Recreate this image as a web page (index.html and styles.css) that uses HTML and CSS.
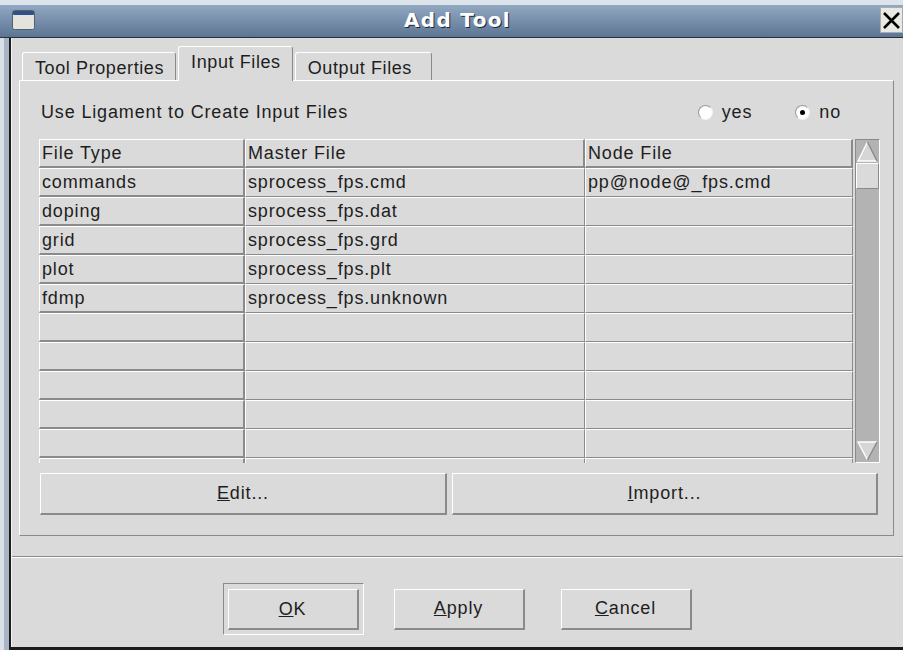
FILE: index.html
```html
<!DOCTYPE html>
<html lang="en">
<head>
<meta charset="utf-8">
<title>Add Tool</title>
<link rel="stylesheet" href="styles.css">
</head>
<body>
<div class="window">
  <header class="titlebar">
    <svg class="win-icon" width="23" height="20" viewBox="0 0 23 20">
      <rect x="0.5" y="0.5" width="22" height="19" rx="2" fill="#e4e4de" stroke="#55606c"/>
      <rect x="1" y="1" width="21" height="4" rx="1" fill="#2f5089"/>
    </svg>
    <h1 class="title">Add Tool</h1>
    <button class="close" type="button">
      <svg width="21" height="24" viewBox="0 0 21 24">
        <path d="M3 5 L18 20 M18 5 L3 20" stroke="#000" stroke-width="2.6" fill="none"/>
      </svg>
    </button>
  </header>

  <div class="frame">
    <div class="client">
      <div class="content">
        <nav class="tabs">
          <div class="tab">Tool Properties</div>
          <div class="tab active">Input Files</div>
          <div class="tab last">Output Files</div>
        </nav>

        <section class="panel">
          <div class="option-row">
            <span class="option-label">Use Ligament to Create Input Files</span>
            <div class="radios">
              <label class="radio"><span class="radio-dot"></span>yes</label>
              <label class="radio checked"><span class="radio-dot"></span>no</label>
            </div>
          </div>

          <div class="table-wrap">
            <div class="grid">
              <div class="row">
                <div class="cell head">File Type</div>
                <div class="cell head">Master File</div>
                <div class="cell head">Node File</div>
              </div>
              <div class="row">
                <div class="cell head">commands</div>
                <div class="cell">sprocess_fps.cmd</div>
                <div class="cell">pp@node@_fps.cmd</div>
              </div>
              <div class="row">
                <div class="cell head">doping</div>
                <div class="cell">sprocess_fps.dat</div>
                <div class="cell"></div>
              </div>
              <div class="row">
                <div class="cell head">grid</div>
                <div class="cell">sprocess_fps.grd</div>
                <div class="cell"></div>
              </div>
              <div class="row">
                <div class="cell head">plot</div>
                <div class="cell">sprocess_fps.plt</div>
                <div class="cell"></div>
              </div>
              <div class="row">
                <div class="cell head">fdmp</div>
                <div class="cell">sprocess_fps.unknown</div>
                <div class="cell"></div>
              </div>
              <div class="row"><div class="cell head"></div><div class="cell"></div><div class="cell"></div></div>
              <div class="row"><div class="cell head"></div><div class="cell"></div><div class="cell"></div></div>
              <div class="row"><div class="cell head"></div><div class="cell"></div><div class="cell"></div></div>
              <div class="row"><div class="cell head"></div><div class="cell"></div><div class="cell"></div></div>
              <div class="row"><div class="cell head"></div><div class="cell"></div><div class="cell"></div></div>
              <div class="row"><div class="cell head"></div><div class="cell"></div><div class="cell"></div></div>
            </div>

            <div class="scrollbar">
              <svg class="arrow" width="23" height="23" viewBox="0 0 23 23">
                <polygon points="11.5,2 2,21 21,21" fill="#d6d6d6"/>
                <path d="M11.5 2 L2 21 L21 21" stroke="#fff" stroke-width="1.4" fill="none"/>
                <path d="M11.5 2 L21 21" stroke="#8a8a8a" stroke-width="1.4" fill="none"/>
              </svg>
              <div class="thumb"></div>
              <div class="trough"></div>
              <svg class="arrow" width="23" height="22" viewBox="0 0 23 22">
                <polygon points="2,2 21,2 11.5,20" fill="#d6d6d6"/>
                <path d="M11.5 20 L2 2 L21 2" stroke="#fff" stroke-width="1.4" fill="none"/>
                <path d="M21 2 L11.5 20" stroke="#8a8a8a" stroke-width="1.4" fill="none"/>
              </svg>
            </div>
          </div>

          <div class="action-row">
            <button class="btn edit" type="button"><u>E</u>dit...</button>
            <button class="btn import" type="button"><u>I</u>mport...</button>
          </div>
        </section>
      </div>

      <div class="separator"></div>

      <footer class="dialog-buttons">
        <div class="focus-frame">
          <button class="btn dlg" type="button"><u>O</u>K</button>
        </div>
        <button class="btn dlg" type="button"><u>A</u>pply</button>
        <button class="btn dlg cancel" type="button"><u>C</u>ancel</button>
      </footer>
    </div>
  </div>
</div>
</body>
</html>
```

FILE: styles.css
```css
* {
  box-sizing: border-box;
}

html,
body {
  margin: 0;
  padding: 0;
}

body {
  width: 903px;
  height: 650px;
  overflow: hidden;
  background: #dadada;
  font-family: "Liberation Sans", Arial, sans-serif;
  font-size: 18px;
  letter-spacing: 0.85px;
  color: #1e1e1e;
}

.window {
  display: flex;
  flex-direction: column;
  width: 903px;
  height: 650px;
}

/* ---- title bar ---- */
.titlebar {
  flex: none;
  height: 38px;
  display: flex;
  align-items: flex-start;
  border-top: 5px solid #dde3ea;
  border-bottom: 1px solid #27313d;
  background: linear-gradient(#92a8c3, #5c7593);
}

.win-icon {
  flex: none;
  margin: 5px 0 0 12px;
}

.title {
  flex: 1;
  margin: 0;
  text-align: center;
  font-family: "DejaVu Sans", sans-serif;
  font-weight: bold;
  font-size: 20px;
  letter-spacing: 1.3px;
  line-height: 30px;
  color: #fff;
  text-shadow: 1px 1px 0 #1d2734;
}

.close {
  flex: none;
  width: 23px;
  height: 26px;
  margin-top: 2px;
  padding: 0;
  display: flex;
  align-items: center;
  justify-content: center;
  background: #e9e9e3;
  border: 1px solid #a6adb5;
}

/* ---- window frame and client area ---- */
.frame {
  flex: 1;
  display: flex;
  border-left: 4px solid #dae0e7;
  padding-left: 5px;
  background: #a9b5c4;
}

.client {
  flex: 1;
  display: flex;
  flex-direction: column;
  background: #dadada;
  border-left: 2px solid #1b1b1b;
  border-bottom: 3px solid #1b1b1b;
  box-shadow: inset 1px 0 0 #f4f4f4;
}

.content {
  padding: 8px 9px 0 8px;
}

/* ---- tabs ---- */
.tabs {
  display: flex;
  align-items: flex-end;
  height: 34px;
  padding-left: 3px;
  gap: 2px;
}

.tab {
  height: 28px;
  padding: 0 11px 0 12px;
  line-height: 30px;
  letter-spacing: 0.6px;
  background: #dadada;
  border-top: 1px solid #fff;
  border-left: 1px solid #fff;
  border-right: 1px solid #8a8a8a;
  border-radius: 3px 3px 0 0;
  white-space: nowrap;
}

.tab.active {
  position: relative;
  z-index: 1;
  height: 35px;
  margin-bottom: -1px;
  line-height: 30px;
}

.tab.last {
  padding-right: 19px;
}

/* ---- tab panel ---- */
.panel {
  height: 456px;
  padding: 19px 13px 0 19px;
  border-top: 1px solid #fff;
  border-left: 1px solid #fff;
  border-right: 1px solid #8a8a8a;
  border-bottom: 1px solid #8a8a8a;
}

.option-row {
  display: flex;
  align-items: center;
  justify-content: space-between;
  height: 24px;
  padding-left: 2px;
}

.radios {
  display: flex;
  align-items: center;
  margin-right: 39px;
}

.radio {
  display: flex;
  align-items: center;
  gap: 9px;
}

.radio + .radio {
  margin-left: 43px;
}

.radio-dot {
  width: 15px;
  height: 15px;
  border-radius: 50%;
  background: #fff;
  border: 1px solid;
  border-color: #9a9a9a #f2f2f2 #f2f2f2 #9a9a9a;
  display: flex;
  align-items: center;
  justify-content: center;
}

.radio.checked .radio-dot::after {
  content: "";
  width: 5px;
  height: 5px;
  border-radius: 50%;
  background: #000;
}

/* ---- file table ---- */
.table-wrap {
  display: flex;
  gap: 2px;
  height: 324px;
  margin-top: 15px;
}

.grid {
  width: 814px;
  height: 324px;
  overflow: hidden;
}

.row {
  display: grid;
  grid-template-columns: 206px 340px 268px;
  height: 29px;
}

.cell {
  height: 29px;
  padding-left: 2px;
  line-height: 27px;
  white-space: nowrap;
  overflow: hidden;
  background: #dadada;
  border-top: 1px solid #fff;
  border-left: 1px solid #fff;
  border-right: 1px solid #8a8a8a;
  border-bottom: 1px solid #8a8a8a;
}

.cell.head {
  line-height: 26px;
  border-right-width: 2px;
  border-bottom-width: 2px;
}

.scrollbar {
  width: 25px;
  height: 324px;
  display: flex;
  flex-direction: column;
  background: #b3b3b3;
  border-top: 1px solid #8a8a8a;
  border-left: 1px solid #8a8a8a;
  border-right: 1px solid #fff;
  border-bottom: 1px solid #fff;
}

.arrow {
  display: block;
  flex: none;
}

.thumb {
  flex: none;
  height: 26px;
  background: #dadada;
  border-top: 1px solid #fff;
  border-left: 1px solid #fff;
  border-right: 1px solid #8a8a8a;
  border-bottom: 1px solid #8a8a8a;
}

.trough {
  flex: 1;
}

/* ---- buttons ---- */
.btn {
  font: inherit;
  letter-spacing: inherit;
  color: inherit;
  padding: 0;
  background: #dadada;
  border-top: 1px solid #fff;
  border-left: 1px solid #fff;
  border-right: 2px solid #8a8a8a;
  border-bottom: 2px solid #8a8a8a;
}

.action-row {
  display: flex;
  gap: 5px;
  margin-top: 10px;
  margin-left: 1px;
}

.btn.edit {
  width: 407px;
  height: 42px;
}

.btn.import {
  width: 426px;
  height: 42px;
}

.separator {
  margin: 20px 0 0 1px;
  border-top: 1px solid #8a8a8a;
  border-bottom: 1px solid #fff;
}

.dialog-buttons {
  display: flex;
  justify-content: center;
  align-items: center;
  gap: 30px;
  padding-top: 25px;
}

.focus-frame {
  padding: 5px 4px 4px 4px;
  border-top: 1px solid #8a8a8a;
  border-left: 1px solid #8a8a8a;
  border-right: 1px solid #fff;
  border-bottom: 1px solid #fff;
}

.btn.dlg {
  display: block;
  width: 131px;
  height: 41px;
}

.btn.cancel {
  margin-left: 6px;
}
```
